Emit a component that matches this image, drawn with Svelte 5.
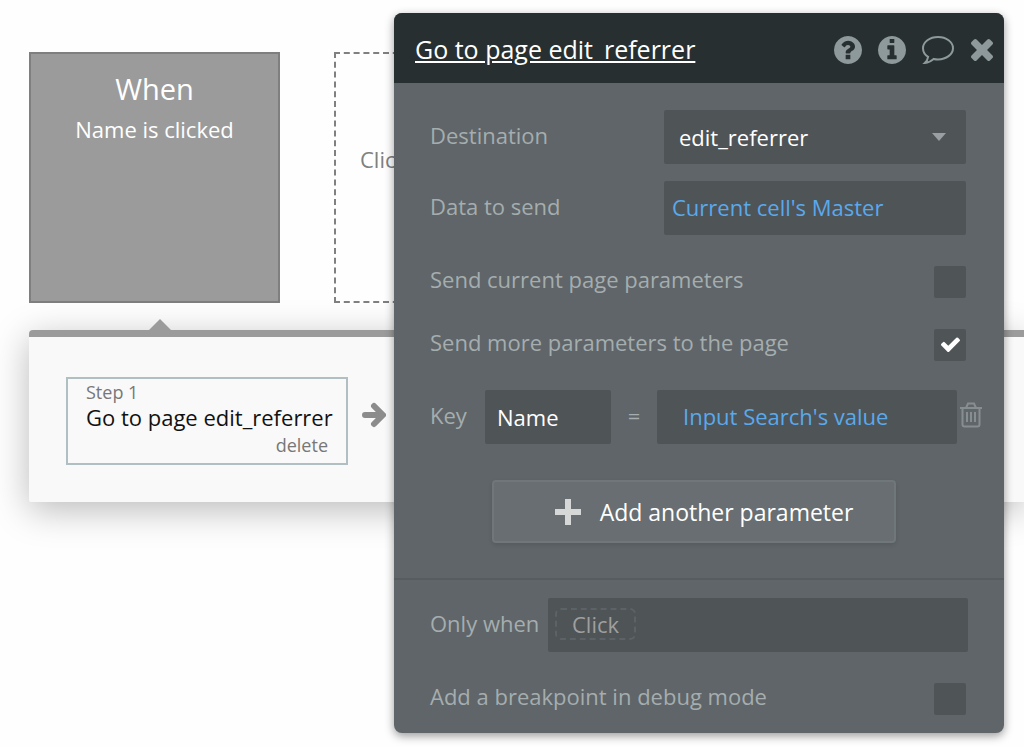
<script lang="ts">
  let destination = $state('edit_referrer');
  let sendCurrent = $state(false);
  let sendMore = $state(true);
  let breakpoint = $state(false);
  let paramKey = $state('Name');
</script>

{#snippet checkbox(id: string, label: string, get: () => boolean, set: (v: boolean) => void)}
  <div class="row check-row">
    <label for={id}>{label}</label>
    <span class="check">
      <input {id} type="checkbox" bind:checked={get, set} />
      {#if get()}
        <svg viewBox="121 302 1550 1220" aria-hidden="true">
          <path d="M1671 566q0 40-28 68l-724 724-136 136q-28 28-68 28t-68-28l-136-136-362-362q-28-28-28-68t28-68l136-136q28-28 68-28t68 28l294 295 656-657q28-28 68-28t68 28l136 136q28 28 28 68z" />
        </svg>
      {/if}
    </span>
  </div>
{/snippet}

<main class="workflow">
  <section class="events">
    <article class="event">
      <h2>When</h2>
      <p>Name is clicked</p>
    </article>
    <button type="button" class="event-empty">Click here</button>
  </section>

  <section class="actions">
    <article class="step">
      <span class="muted">Step 1</span>
      <span class="step-name">Go to page edit_referrer</span>
      <button type="button" class="delete muted">delete</button>
    </article>
    <svg class="arrow" viewBox="0 0 24 26" aria-hidden="true">
      <path d="M3 13h17M12 4l9 9-9 9" />
    </svg>
  </section>
</main>

<!-- Property editor, floats over the workflow canvas -->
<aside class="editor">
  <header>
    <h1>Go to page edit_referrer</h1>
    <button type="button" aria-label="Help">
      <svg class="round" viewBox="0 0 1536 1536">
        <path d="M896 1248v-192q0-14-9-23t-23-9h-192q-14 0-23 9t-9 23v192q0 14 9 23t23 9h192q14 0 23-9t9-23zm256-672q0-88-55.500-163t-138.500-116-170-41q-243 0-371 213-15 24 8 42l132 100q7 6 19 6 16 0 25-12 53-68 86-92 34-24 86-24 48 0 85.500 26t37.500 59q0 38-20 61t-68 45q-63 28-115.500 86.500t-52.500 125.500v36q0 14 9 23t23 9h192q14 0 23-9t9-23q0-19 21.500-49.500t54.500-49.500q32-18 49-28.500t46-35 44.500-48 28-60.500 12.500-81zm384 192q0 209-103 385.500t-279.500 279.500-385.500 103-385.500-103-279.500-279.500-103-385.500 103-385.500 279.500-279.500 385.500-103 385.500 103 279.500 279.500 103 385.500z" />
      </svg>
    </button>
    <button type="button" aria-label="Info">
      <svg class="round" viewBox="0 0 1536 1536">
        <path d="M1024 1248v-160q0-14-9-23t-23-9h-96v-512q0-14-9-23t-23-9h-320q-14 0-23 9t-9 23v160q0 14 9 23t23 9h96v320h-96q-14 0-23 9t-9 23v160q0 14 9 23t23 9h448q14 0 23-9t9-23zm-128-896v-160q0-14-9-23t-23-9h-192q-14 0-23 9t-9 23v160q0 14 9 23t23 9h192q14 0 23-9t9-23zm640 416q0 209-103 385.500t-279.500 279.500-385.500 103-385.500-103-279.500-279.500-103-385.500 103-385.500 279.500-279.500 385.500-103 385.500 103 279.500 279.500 103 385.500z" />
      </svg>
    </button>
    <button type="button" aria-label="Comment">
      <svg class="comment" viewBox="0 0 33 28">
        <path d="M16 1C24.300 1 31 6 31 12.200S24.300 23.400 16 23.400c-1.500 0-2.900-.2-4.300-.5C9.500 25 6.500 26.700 2.800 27c1.600-1.500 2.900-3.300 3.300-6.200C3 18.800 1 15.700 1 12.200 1 6 7.700 1 16 1z" />
      </svg>
    </button>
    <button type="button" aria-label="Close">
      <svg class="close" viewBox="302 366 1188 1188">
        <path d="M1490 1322q0 40-28 68l-136 136q-28 28-68 28t-68-28l-294-294-294 294q-28 28-68 28t-68-28l-136-136q-28-28-28-68t28-68l294-294-294-294q-28-28-28-68t28-68l136-136q28-28 68-28t68 28l294 294 294-294q28-28 68-28t68 28l136 136q28 28 28 68t-28 68l-294 294 294 294q28 28 28 68z" />
      </svg>
    </button>
  </header>

  <div class="group">
    <div class="row">
      <label for="destination">Destination</label>
      <span class="select">
        <select id="destination" class="field" bind:value={destination}>
          <option>edit_referrer</option>
        </select>
        <svg viewBox="0 0 16 10" aria-hidden="true"><path d="M1 1h14L8 9z" /></svg>
      </span>
    </div>
    <div class="row">
      <label for="data">Data to send</label>
      <button type="button" id="data" class="field expression">Current cell's Master</button>
    </div>

    <div class="checks">
      {@render checkbox('send-current', 'Send current page parameters', () => sendCurrent, (v) => (sendCurrent = v))}
      {@render checkbox('send-more', 'Send more parameters to the page', () => sendMore, (v) => (sendMore = v))}
    </div>

    <div class="param">
      <label for="key">Key</label>
      <input id="key" class="field key" type="text" bind:value={paramKey} />
      <span class="equals">=</span>
      <button type="button" class="field expression value">Input Search's value</button>
      <button type="button" class="trash" aria-label="Remove parameter">
        <svg viewBox="0 0 22 26">
          <path d="M0 6h22M6 6l2-4.500h6L16 6M2.500 6v16.500q0 2 2 2h13q2 0 2-2V6M7 10v10M11 10v10M15 10v10" />
        </svg>
      </button>
    </div>

    <button type="button" class="add">
      <svg viewBox="0 0 26 26" aria-hidden="true"><path d="M13 0v26M0 13h26" /></svg>
      Add another parameter
    </button>
  </div>

  <div class="group condition">
    <div class="row">
      <label for="only-when">Only when</label>
      <button type="button" id="only-when" class="field only-when"><span>Click</span></button>
    </div>
    {@render checkbox('breakpoint', 'Add a breakpoint in debug mode', () => breakpoint, (v) => (breakpoint = v))}
  </div>
</aside>

<style>
  :global(body) {
    margin: 0;
    background: #fefefe;
    font-family: 'Open Sans', sans-serif;
    font-size: 22px;
    line-height: 30px;
  }

  h1,
  h2,
  p {
    margin: 0;
    font-weight: 400;
  }

  button,
  input,
  select {
    margin: 0;
    padding: 0;
    border: 0;
    background: none;
    font: inherit;
    color: inherit;
    box-sizing: border-box;
  }

  button {
    cursor: pointer;
  }

  svg {
    display: block;
    fill: currentColor;
  }

  .workflow {
    box-sizing: border-box;
    min-height: 100vh;
    padding: 52px 0 0 29px;
    overflow: hidden;
  }

  .events {
    display: flex;
    gap: 54px;
  }

  .event,
  .event-empty {
    box-sizing: border-box;
    width: 251px;
    height: 251px;
    flex: none;
  }

  .event {
    padding-top: 16px;
    border: 2px solid #7f7f7f;
    background: #9b9b9b;
    color: #fff;
    text-align: center;
  }

  .event h2 {
    font-size: 29px;
    line-height: 38px;
  }

  .event p {
    padding-top: 6px;
  }

  .event-empty {
    padding: 0 24px 38px;
    border: 2px dashed #808080;
    color: #808080;
    text-align: left;
  }

  .actions {
    position: relative;
    display: flex;
    align-items: center;
    gap: 14px;
    margin-top: 27px;
    padding: 40px 37px 37px;
    border-top: 7px solid #9b9b9b;
    border-radius: 4px 0 0 2px;
    background: #f9f9f9;
    box-shadow: 0 8px 36px rgba(0, 0, 0, 0.27);
  }

  /* Pointer towards the selected event */
  .actions::before {
    content: '';
    position: absolute;
    left: 119px;
    bottom: 100%;
    margin-bottom: 6px;
    border: 12px solid transparent;
    border-top: 0;
    border-bottom-color: #9b9b9b;
  }

  .step {
    display: flex;
    flex-direction: column;
    box-sizing: border-box;
    width: 282px;
    padding: 0 18px 2px;
    border: 2px solid #b0bfc2;
  }

  .muted {
    color: #777;
    font-size: 18px;
    line-height: 26px;
  }

  .step-name {
    line-height: 24px;
    white-space: nowrap;
    color: #111;
  }

  .delete {
    align-self: flex-end;
    line-height: 32px;
  }

  .arrow {
    width: 24px;
    height: 26px;
    margin-bottom: 12px;
    fill: none;
    stroke: #8c8c8c;
    stroke-width: 6;
    stroke-linecap: round;
    stroke-linejoin: round;
  }

  .editor {
    position: absolute;
    top: 13px;
    right: 20px;
    width: 610px;
    border-radius: 8px;
    overflow: hidden;
    background: #5f6568;
    color: #a5adaf;
    box-shadow: 0 3px 10px rgba(0, 0, 0, 0.4);
  }

  header {
    display: flex;
    align-items: center;
    box-sizing: border-box;
    height: 70px;
    padding: 3px 11px 0 21px;
    background: #282f31;
    color: #8d999b;
  }

  header h1 {
    flex: 1;
    padding-bottom: 2px;
    color: #fff;
    font-size: 25px;
    text-decoration: underline;
  }

  header button {
    margin-left: 16px;
  }

  .round {
    width: 28px;
    height: 28px;
  }

  .comment {
    width: 33px;
    height: 28px;
    fill: none;
    stroke: currentColor;
    stroke-width: 2;
  }

  .close {
    width: 22px;
    height: 22px;
  }

  .group {
    padding: 27px 38px 35px 36px;
  }

  .group.condition {
    padding: 18px 38px 18px 36px;
    border-top: 2px solid #575c5f;
  }

  .row {
    display: grid;
    grid-template-columns: 1fr 302px;
    align-items: center;
  }

  .row + .row:not(.check-row) {
    margin-top: 17px;
  }

  label {
    padding-bottom: 4px;
    white-space: nowrap;
  }

  .field {
    width: 100%;
    height: 54px;
    border-radius: 2px;
    background: #4f5457;
  }

  .select {
    display: grid;
    align-items: center;
    color: #fff;
  }

  .select > * {
    grid-area: 1 / 1;
  }

  select {
    appearance: none;
    padding-left: 15px;
  }

  .select svg {
    width: 16px;
    height: 10px;
    margin-right: 19px;
    justify-self: end;
    color: #999fa2;
    pointer-events: none;
  }

  .expression {
    padding: 0 8px 2px;
    color: #5aa9ec;
    text-align: left;
  }

  .checks {
    padding: 15px 0 14px;
  }

  .check-row {
    grid-template-columns: 1fr 32px;
    height: 63px;
  }

  .check-row label {
    padding-bottom: 6px;
  }

  .check {
    display: grid;
    place-items: center;
    color: #fff;
  }

  .check > * {
    grid-area: 1 / 1;
  }

  .check input {
    appearance: none;
    width: 32px;
    height: 32px;
    border-radius: 2px;
    background: #4f5457;
  }

  .check svg {
    width: 19px;
    height: 15px;
    pointer-events: none;
  }

  .param {
    display: flex;
    align-items: center;
    margin-right: -16px;
  }

  .param label {
    width: 55px;
  }

  .key {
    width: 126px;
    padding-left: 12px;
    color: #fff;
  }

  .equals {
    width: 46px;
    padding-bottom: 4px;
    text-align: center;
  }

  .value {
    flex: 1;
    padding-left: 26px;
  }

  .trash {
    margin-left: 3px;
    padding-bottom: 4px;
    color: #878e91;
  }

  .trash svg {
    width: 22px;
    height: 26px;
    fill: none;
    stroke: currentColor;
    stroke-width: 2;
  }

  .add {
    display: flex;
    align-items: center;
    justify-content: center;
    gap: 19px;
    width: 404px;
    height: 63px;
    margin: 36px auto 0 62px;
    padding: 0 0 0 20px;
    border: 2px solid #70777a;
    border-radius: 4px;
    background: #686e71;
    color: #fff;
    font-size: 23px;
    box-shadow: 0 2px 4px rgba(0, 0, 0, 0.1);
  }

  .add svg {
    width: 26px;
    height: 26px;
    stroke: #d6d8d8;
    stroke-width: 6;
  }

  .condition .row:not(.check-row) {
    grid-template-columns: 118px 1fr;
    margin: 0 -2px 15px 0;
  }

  .only-when {
    padding: 0 7px 2px;
    color: #a09f9f;
    text-align: left;
  }

  .only-when span {
    display: inline-block;
    padding: 0 15px;
    border: 2px dashed #5c6265;
    border-radius: 6px;
    line-height: 28px;
  }

  .condition .check-row {
    height: 64px;
    margin-bottom: -16px;
  }
</style>
